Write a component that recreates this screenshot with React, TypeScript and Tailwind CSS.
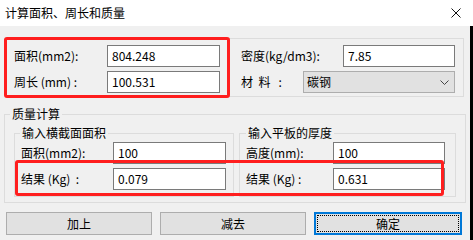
import React from 'react';

const TextBox = ({ value, className }: { value: string; className: string }) => (
  <div className={`h-[22px] border border-[#7a7a7a] bg-white pl-[4px] flex items-center leading-none ${className}`}>
    {value}
  </div>
);

const Label = ({ text, className }: { text: string; className: string }) => (
  <span className={`whitespace-pre leading-none ${className}`}>{text}</span>
);

const Button = ({ text, focused }: { text: string; focused?: boolean }) =>
  focused ? (
    <div className="flex-1 h-[23px] border-2 border-[#0078d7] bg-[#e1e1e1] flex">
      <div className="flex-1 m-[1px] border border-dotted border-black flex items-center justify-center leading-none">
        {text}
      </div>
    </div>
  ) : (
    <div className="flex-1 h-[23px] border border-[#adadad] bg-[#e1e1e1] flex items-center justify-center leading-none">
      {text}
    </div>
  );

export default function App() {
  return (
    <div className="relative w-[473px] h-[240px] bg-[#f0f0f0] overflow-hidden flex flex-col text-black text-[12px] font-['Noto_Sans_CJK_SC','Noto_Sans',sans-serif]">
      {/* title bar */}
      <div className="h-[26px] shrink-0 bg-white flex items-center justify-between pl-[5px] pr-[12px]">
        <span className="leading-none">计算面积、周长和质量</span>
        <svg width="10" height="10" viewBox="0 0 10 10">
          <path d="M0.5 0.5 L9.5 9.5 M9.5 0.5 L0.5 9.5" stroke="#111" strokeWidth="1" fill="none" />
        </svg>
      </div>

      <div className="flex flex-1 min-h-0">
        <div className="flex-1 flex flex-col">
          {/* area / perimeter / density */}
          <div className="mt-[12px] ml-[5px] mr-[6px] h-[59px] border border-[#dcdcdc] flex pt-[6px]">
            <div className="w-[227px] pl-[8px] flex flex-col gap-[4px]">
              <div className="flex items-center">
                <Label text="面积(mm2):" className="w-[93px]" />
                <TextBox value="804.248" className="w-[113px]" />
              </div>
              <div className="flex items-center">
                <Label text="周长 (mm) :" className="w-[93px]" />
                <TextBox value="100.531" className="w-[113px]" />
              </div>
            </div>
            <div className="flex-1 pl-[8px] flex flex-col gap-[4px]">
              <div className="flex items-center">
                <Label text="密度(kg/dm3):" className="w-[102px]" />
                <TextBox value="7.85" className="w-[112px]" />
              </div>
              <div className="flex items-center">
                <Label text="材  料   :" className="w-[62px]" />
                <div className="w-[152px] h-[22px] border border-[#adadad] bg-[#e1e1e1] flex items-center justify-between pl-[3px] pr-[5px] leading-none">
                  <span>碳钢</span>
                  <svg width="9" height="5" viewBox="0 0 9 5">
                    <path d="M0.5 0.5 L4.5 4.5 L8.5 0.5" stroke="#444" strokeWidth="1" fill="none" />
                  </svg>
                </div>
              </div>
            </div>
          </div>

          {/* mass calculation */}
          <fieldset className="mt-[9px] ml-[4px] mr-[4px] border border-[#dcdcdc] p-0 pb-[5px] min-w-0">
            <legend className="ml-[5px] px-[2px] leading-[16px]">质量计算</legend>
            <div className="flex gap-[5px] pl-[9px] pr-[9px]">
              <fieldset className="mt-[3px] w-[220px] border border-[#dcdcdc] p-0 pb-[6px] min-w-0">
                <legend className="ml-[5px] px-[2px] leading-[16px]">输入横截面面积</legend>
                <div className="pt-[1px] pl-[6px] flex flex-col gap-[4px]">
                  <div className="flex items-center">
                    <Label text="面积(mm2):" className="w-[92px]" />
                    <TextBox value="100" className="w-[113px]" />
                  </div>
                  <div className="flex items-center">
                    <Label text="结果 (Kg)  :" className="w-[92px]" />
                    <TextBox value="0.079" className="w-[113px]" />
                  </div>
                </div>
              </fieldset>
              <fieldset className="mt-[3px] flex-1 border border-[#dcdcdc] p-0 pb-[6px] min-w-0">
                <legend className="ml-[6px] px-[2px] leading-[16px]">输入平板的厚度</legend>
                <div className="pt-[1px] pl-[6px] flex flex-col gap-[4px]">
                  <div className="flex items-center">
                    <Label text="高度(mm):" className="w-[87px]" />
                    <TextBox value="100" className="w-[112px]" />
                  </div>
                  <div className="flex items-center">
                    <Label text="结果 (Kg) :" className="w-[87px]" />
                    <TextBox value="0.631" className="w-[112px]" />
                  </div>
                </div>
              </fieldset>
            </div>
          </fieldset>

          {/* buttons */}
          <div className="mt-[9px] pl-[6px] pr-[8px] flex gap-[8px]">
            <Button text="加上" />
            <Button text="减去" />
            <Button text="确定" focused />
          </div>
        </div>
        <div className="w-[3px] bg-black" />
      </div>

      {/* red highlight annotations */}
      <div className="absolute left-[4px] top-[37px] w-[226px] h-[61px] border-[3px] border-[#ff1e1e] rounded-[3px]" />
      <div className="absolute left-[15px] top-[160px] w-[429px] h-[36px] border-[3px] border-[#ff1e1e] rounded-[3px]" />
    </div>
  );
}
